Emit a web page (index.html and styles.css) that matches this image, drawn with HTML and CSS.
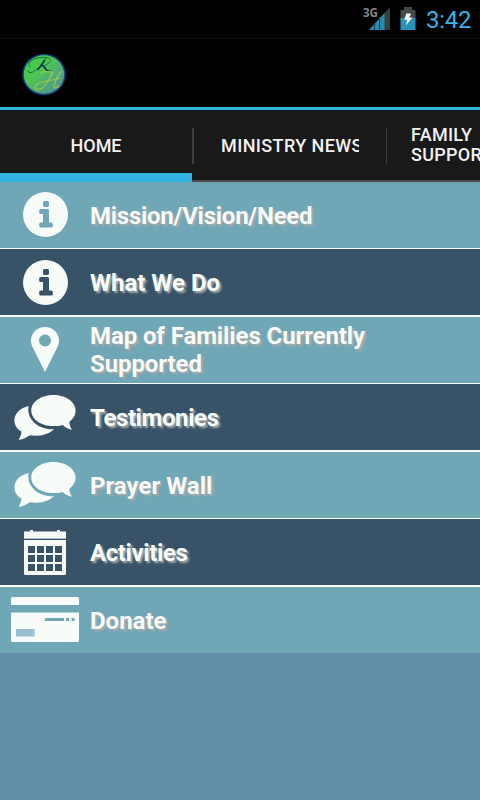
FILE: index.html
```html
<!DOCTYPE html>
<html lang="en">
<head>
<meta charset="utf-8">
<title>Home</title>
<link rel="stylesheet" href="styles.css">
</head>
<body>
<svg class="defs" width="0" height="0">
  <defs>
    <linearGradient id="orb" x1="0" y1="0" x2="1" y2="1">
      <stop offset="0" stop-color="#3fd047"/><stop offset=".4" stop-color="#4cc653"/><stop offset="1" stop-color="#5582ad"/>
    </linearGradient>
    <symbol id="info" viewBox="0 0 45 45">
      <path fill="#f8fcf9" fill-rule="evenodd" d="M22.500 0a22.500 22.500 0 1 1 0 45a22.500 22.500 0 1 1 0-45ZM21.500 9q-1.500 0-1.500 1.500v3q0 1.500 1.500 1.500h3q1.500 0 1.500-1.500v-3q0-1.500-1.500-1.500ZM17.700 17q-1.500 0-1.500 1.500v2q0 1.500 1.500 1.500h2.300v8.500h-2.300q-1.500 0-1.500 1.500v2q0 1.500 1.500 1.500h10.600q1.500 0 1.500-1.500v-2q0-1.500-1.500-1.500h-2.300v-12q0-1.500-1.500-1.500Z"/>
    </symbol>
    <symbol id="chat" viewBox="0 0 62 45">
      <g fill="#f8fcf9">
        <path d="M39.500 0C51.500 0 61.600 6.800 61.600 15.500c0 4.800-2.600 8.500-6.300 11.400.3 3 1 5.200 2.700 7.800-4-.8-6.800-2.400-9.200-4.800-3 .9-6 1.200-9.300 1.200C27.300 31.100 17.300 24.500 17.300 15.500S27.300 0 39.500 0Z"/>
        <path d="M14.600 11C12.500 21 20 34.500 40 34.300c-4.500 4.500-12.500 7.300-21.500 6.100-2.500-.3-4 .7-6 1.900-2.300 1.400-5 2.300-8 2.400 1.900-2.500 2.900-5 2.900-8.100C2.500 33.500.4 29.800.4 25.200.4 18.400 6.500 13 14.600 11Z"/>
      </g>
    </symbol>
  </defs>
</svg>
<div class="status">
  <svg class="signal" width="30" height="26" viewBox="0 0 30 26">
    <path d="M27 2v23H6Z" fill="#3b3e3f"/>
    <path d="M21.500 8v17H6Z" fill="#258bb0"/>
    <path d="M11.500 18v7M16.500 12v13" stroke="#123f50" stroke-width="1"/>
    <text class="net" x="0" y="12" textLength="15" lengthAdjust="spacingAndGlyphs">3G</text>
  </svg>
  <svg class="battery" width="16" height="24" viewBox="0 0 16 24">
    <path d="M4 0h8v3h3.500v9H.5V3H4Z" fill="#45494a"/>
    <path d="M.5 11h15v12H.5Z" fill="#2c91b8"/>
    <path d="M6.300 6.500h4.900L9.300 10.500h3.200L6 18.500 7.200 12.800H4.200Z" fill="#eef6f8"/>
  </svg>
  <span class="clock">3:42</span>
</div>
<header class="bar">
  <svg class="logo" width="46" height="44" viewBox="0 0 46 44">
    <ellipse cx="23" cy="21.500" rx="21" ry="20" fill="url(#orb)" stroke="#123d7c" stroke-width="1.500"/>
    <g fill="none" stroke-linecap="round">
      <path d="M7 18c0 3 5 2 9-2 4-3 7-8 9-11M9 14C5 10 12 5 20 4.500c7-.5 11 1 9 4s-5 4-8 4.500c3 1 3 7 9 4" stroke="#15603f" stroke-width=".9"/>
      <path d="M23.500 7.500c-2 3-4 6-6.500 9M22 13c3 1 3 5 5 5" stroke="#063a38" stroke-width="1.500"/>
      <path d="M20 21c0-3 8-3 12-1-5 5-7 15-13 16-4 1-6-1-4-4 5-4 14-4 24-7M41 18c-5 4-7 11-8 15 0 3 3 2 5 0" stroke="#9ccb48" stroke-width="1.100"/>
    </g>
  </svg>
</header>
<nav class="tabs">
  <div class="tab active">HOME</div>
  <div class="rule"></div>
  <div class="tab news"><span class="clip">MINISTRY NEWS</span></div>
  <div class="rule thin"></div>
  <div class="tab family">FAMILY<br>SUPPORT</div>
</nav>
<main class="list">
  <div class="row"><div class="icon"><svg width="45" height="45"><use href="#info"/></svg></div><div class="label snug">Mission/Vision/Need</div></div>
  <div class="row dark"><div class="icon"><svg width="45" height="45"><use href="#info"/></svg></div><div class="label">What We Do</div></div>
  <div class="row"><div class="icon"><svg width="28" height="45" viewBox="0 0 28 45"><path fill="#f8fcf9" fill-rule="evenodd" d="M14 0C22 0 28 6 28 13.500c0 3-.8 5-2 7.500L14 45 2 21C.8 18.500 0 16.500 0 13.500 0 6 6 0 14 0ZM14 7.500a6 6 0 1 0 0 12a6 6 0 1 0 0-12Z"/></svg></div><div class="label wrapped">Map of Families Currently Supported</div></div>
  <div class="row dark"><div class="icon"><svg width="62" height="45"><use href="#chat"/></svg></div><div class="label tight">Testimonies</div></div>
  <div class="row"><div class="icon"><svg width="62" height="45"><use href="#chat"/></svg></div><div class="label">Prayer Wall</div></div>
  <div class="row dark"><div class="icon"><svg width="42" height="45" viewBox="0 0 42 45"><path fill="#f8fcf9" d="M0 1.500h6V0h3v1.500h24V0h3v1.500h6V8H0Z"/><path fill="#aabbcf" d="M0 8h42v1H0Z"/><path fill="#f8fcf9" fill-rule="evenodd" d="M0 10h42v33.500q0 1.500-1.500 1.500h-39Q0 45 0 43.500ZM4 16v7h7v-7ZM13 16v7h7v-7ZM22 16v7h7v-7ZM31 16v7h7v-7ZM4 25v7h7v-7ZM13 25v7h7v-7ZM22 25v7h7v-7ZM31 25v7h7v-7ZM4 34v7h7v-7ZM13 34v7h7v-7ZM22 34v7h7v-7ZM31 34v7h7v-7Z"/></svg></div><div class="label tight">Activities</div></div>
  <div class="row"><div class="icon"><svg width="68" height="45" viewBox="0 0 68 45"><path fill="#f8fcf9" d="M1 0h66l1 1v7H0V1ZM0 15.500h68V44l-1 1H1l-1-1Z"/><path fill="#70a7b7" d="M34 21h19v3H34ZM55 21h3v3h-3ZM60.500 21h3v3h-3Z"/><path fill="#98bfd2" d="M5 32h18.500v7.500H5Z"/></svg></div><div class="label">Donate</div></div>
</main>
</body>
</html>
```
FILE: styles.css
```css
* { box-sizing: border-box; }
body {
  margin: 0;
  width: 480px;
  height: 800px;
  overflow: hidden;
  background: #608fa7;
  font-family: Roboto, "Liberation Sans", sans-serif;
}
.defs { display: block; }
.status {
  display: flex;
  justify-content: flex-end;
  height: 39px;
  padding-right: 9px;
  background: #000;
  border-bottom: 1px solid #0d0d0d;
}
.signal { margin: 5px 7px 0 0; }
.net { font: bold 13px "Open Sans", sans-serif; fill: #858585; }
.battery { margin: 7px 10px 0 0; }
.clock {
  width: 45px;
  font-size: 24px;
  line-height: 40px;
  letter-spacing: -0.3px;
  color: #33b5e5;
  white-space: nowrap;
}
.bar {
  height: 71px;
  padding: 14px 0 0 21px;
  background: #000;
  border-bottom: 3px solid #31b4e0;
}
.logo { display: block; }
.tabs {
  display: flex;
  height: 72px;
  overflow: hidden;
  background: #191919;
  color: #f1f1f1;
  font-size: 18px;
  font-weight: 500;
  line-height: 20px;
}
.tab {
  flex: none;
  display: flex;
  align-items: center;
  width: 192px;
  border-bottom: 2px solid #4b4b4b;
}
.tab.active {
  justify-content: center;
  padding-top: 9px;
  border-bottom: 9px solid #31b4e0;
}
.news { padding: 2px 0 0 27px; letter-spacing: 0.4px; }
.clip { width: 138px; overflow: hidden; white-space: nowrap; }
.family { padding-left: 24px; letter-spacing: 0.3px; }
.rule {
  flex: none;
  width: 2px;
  border-bottom: 2px solid #4b4b4b;
  background: linear-gradient(#3b403f, #3b403f) 0 18px / 100% 36px no-repeat;
}
.rule.thin { width: 1px; }
.row {
  display: flex;
  align-items: center;
  height: 67px;
  background: #70a7b7;
  border-bottom: 1px solid #f8fcf9;
}
.row.dark {
  height: 68px;
  background: #385368;
  border-bottom-width: 2px;
}
.row:last-child { height: 66px; border-bottom: 0; }
.icon {
  flex: none;
  display: flex;
  justify-content: center;
  width: 90px;
  padding-bottom: 1px;
}
.dark .icon { padding-bottom: 0; }
.icon svg { display: block; }
.label {
  width: 300px;
  padding-top: 1px;
  color: #f8fcf9;
  font-size: 24px;
  font-weight: 700;
  line-height: 28px;
  text-shadow: 2px 2px 2px #aaa;
}
.snug { letter-spacing: -0.26px; }
.tight { letter-spacing: -0.4px; }
.wrapped { padding: 0 0 1px; letter-spacing: -0.1px; }
```
